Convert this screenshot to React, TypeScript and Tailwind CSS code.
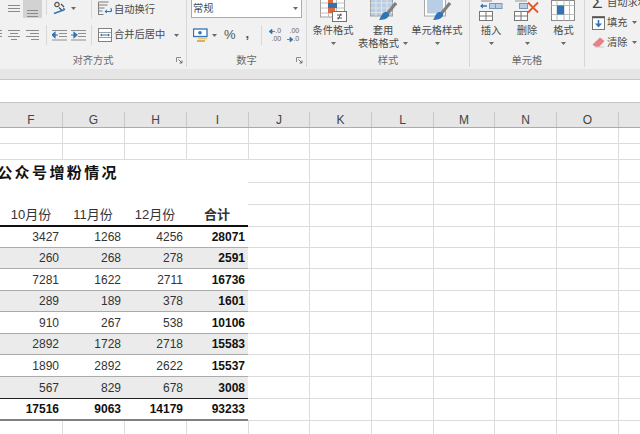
import React from "react";

const Caret = ({ className = "" }: { className?: string }) => (
  <svg width="5" height="3" viewBox="0 0 5 3" className={className}>
    <path d="M0 0h5L2.5 3z" fill="#6a6a6a" />
  </svg>
);

const Lines = ({ rows, w = 13, h = 12 }: { rows: [number, number, number][]; w?: number; h?: number }) => (
  <svg width={w} height={h} viewBox={`0 0 ${w} ${h}`} className="shrink-0">
    {rows.map(([x1, x2, y], i) => (
      <path key={i} d={`M${x1} ${y + 0.5}H${x2}`} stroke="#8a8a8a" strokeWidth="1" />
    ))}
  </svg>
);

const Orientation = () => (
  <svg width="15" height="15" viewBox="0 0 15 15" className="shrink-0">
    <circle cx="5" cy="3.5" r="2.2" fill="none" stroke="#555" strokeWidth="1.2" />
    <path d="M7 6.5l3 3M9 3l3 3" stroke="#555" strokeWidth="1.4" />
    <path d="M2 12.5L11.5 9" stroke="#2f75b5" strokeWidth="1.4" />
    <path d="M11 6.5l2.5 1.5-2 2.5z" fill="#2f75b5" />
  </svg>
);

const Indent = ({ flip = false }: { flip?: boolean }) => (
  <svg width="15" height="11" viewBox="0 0 15 11" className="shrink-0">
    <path d="M0 .5h15M7 3.5h8M7 6.5h8M0 10h15" stroke="#8f8f8f" strokeWidth="1" />
    {flip ? (
      <path d="M0 5h4M3 2.5L6 5 3 7.5z" stroke="#2f75b5" strokeWidth="1.2" fill="#2f75b5" />
    ) : (
      <path d="M6 5H2M3 2.5L0 5l3 2.5z" stroke="#2f75b5" strokeWidth="1.2" fill="#2f75b5" />
    )}
  </svg>
);

const Wrap = () => (
  <svg width="14" height="15" viewBox="0 0 14 15" className="shrink-0">
    <path d="M.5 1h10M.5 4h9M.5 7h6M.5 10h4M.5 13.5h5M.5 1v13" stroke="#7d7d7d" strokeWidth="1" fill="none" />
    <path d="M8 10.5h3.5a1.5 1.5 0 0 0 1-3" stroke="#2f75b5" strokeWidth="1.2" fill="none" />
    <path d="M6.5 10.5L9 8.5v4z" fill="#2f75b5" />
  </svg>
);

const Merge = () => (
  <svg width="14" height="14" viewBox="0 0 14 14" className="shrink-0">
    <rect x=".5" y=".5" width="13" height="13" fill="#fff" stroke="#808080" />
    <path d="M1 4.5h12M1 9.5h12" stroke="#a0a0a0" />
    <path d="M3 7h8" stroke="#2f75b5" />
    <path d="M2 7l2-1.5v3zM12 7l-2-1.5v3z" fill="#2f75b5" />
  </svg>
);

const Currency = () => (
  <svg width="15" height="15" viewBox="0 0 15 15" className="shrink-0">
    <rect x=".5" y="1" width="13.5" height="7.5" fill="#fff" stroke="#2f75b5" strokeWidth="1.3" />
    <circle cx="7" cy="4.7" r="1.8" fill="#2f75b5" />
    <rect x="5" y="9.5" width="9" height="1.8" fill="#e8c27a" />
    <rect x="4" y="12" width="8" height="2" fill="#e0b060" />
  </svg>
);

const Arrow = ({ right }: { right?: boolean }) => (
  <svg width="6" height="5" viewBox="0 0 6 5" className="shrink-0">
    {right ? <path d="M0 2.5h3M6 2.5L3 .2v4.6z" stroke="#2f75b5" fill="#2f75b5" strokeWidth=".8" /> : <path d="M6 2.5H3M0 2.5L3 .2v4.6z" stroke="#2f75b5" fill="#2f75b5" strokeWidth=".8" />}
  </svg>
);

const Decimal = ({ inc }: { inc?: boolean }) => (
  <div className="w-[14px] flex flex-col items-end text-[7px] leading-[8px] font-['Liberation_Sans',sans-serif] text-[#666666] shrink-0">
    {inc ? (
      <>
        <span>.00</span>
        <span className="flex items-center">
          <Arrow right />
          .0
        </span>
      </>
    ) : (
      <>
        <span className="flex items-center">
          <Arrow />
          .0
        </span>
        <span>.00</span>
      </>
    )}
  </div>
);

const Launcher = () => (
  <svg width="7" height="7" viewBox="0 0 7 7">
    <path d="M.5 5V.5H5" stroke="#8a8a8a" fill="none" />
    <path d="M2.5 2.5L6 6M6 3.5V6H3.5" stroke="#707070" fill="none" />
  </svg>
);

const CondIcon = () => (
  <svg width="27" height="22" viewBox="0 0 27 22">
    <rect x=".5" y="-2" width="24" height="19" fill="#fff" stroke="#a0a0a0" />
    <path d="M8.5 -2v19M16.5 -2v19M.5 3h24M.5 8h24M.5 13h24" stroke="#c0c0c0" />
    <rect x="8" y="-1" width="5" height="4" fill="#e2673b" />
    <rect x="8" y="3" width="9" height="5" fill="#2f75b5" />
    <rect x="8" y="8" width="7" height="5" fill="#e2673b" />
    <rect x="12.5" y="11.5" width="14" height="10" fill="#fff" stroke="#707070" />
    <path d="M17 15h5M17 18h5M21 13.5l-3 6" stroke="#444" strokeWidth=".9" fill="none" />
  </svg>
);

const Brush = () => (
  <>
    <path d="M26 3l-9 11" stroke="#7f7f7f" strokeWidth="3.2" />
    <path d="M15 12c3 0 5 2 4 4-2 3-6 4-10 4 2-2 2-7 6-8z" fill="#2f75b5" />
  </>
);

const TableStyleIcon = () => (
  <svg width="27" height="22" viewBox="0 0 27 22">
    <rect x=".5" y="-2" width="22" height="18" fill="#b9cde5" stroke="#a0a0a0" />
    <path d="M6 -2v18M11.5 -2v18M17 -2v18M.5 3h22M.5 8h22M.5 12.5h22" stroke="#e4e4e4" />
    <Brush />
  </svg>
);

const CellStyleIcon = () => (
  <svg width="27" height="22" viewBox="0 0 27 22">
    <rect x=".5" y="-2" width="21" height="18" fill="#fff" stroke="#a8a8a8" />
    <rect x="3" y="-2" width="16" height="15.5" fill="#b9cde5" />
    <Brush />
  </svg>
);

const Grid3 = () => (
  <>
    <rect x=".5" y="11.5" width="13" height="9" fill="#fff" stroke="#777" />
    <path d="M7 11.5v9M.5 16h13" stroke="#777" />
  </>
);

const InsertIcon = () => (
  <svg width="24" height="21" viewBox="0 0 24 21">
    <path d="M2 1h11" stroke="#888" />
    <rect x="10.5" y="3.5" width="6" height="5" fill="#b9cde5" stroke="#7d97b8" />
    <rect x="16.5" y="3.5" width="6.5" height="5" fill="#b9cde5" stroke="#7d97b8" />
    <path d="M3 6h5" stroke="#2f75b5" strokeWidth="1.5" />
    <path d="M1 6l3-2.5v5z" fill="#2f75b5" />
    <Grid3 />
  </svg>
);

const DeleteIcon = () => (
  <svg width="26" height="21" viewBox="0 0 26 21">
    <path d="M1 1h12" stroke="#999" />
    <rect x="5.5" y="3.5" width="8" height="5" fill="#b9cde5" stroke="#7d97b8" />
    <Grid3 />
    <path d="M14 2.5l10 10M24 2.5l-10 10" stroke="#e2572b" strokeWidth="1.8" />
  </svg>
);

const FormatIcon = () => (
  <svg width="25" height="22" viewBox="0 0 25 22">
    <rect x=".5" y=".5" width="23" height="20" fill="#fff" stroke="#8a8a8a" />
    <path d="M6 .5v20M13 .5v20M18.5 .5v20M.5 5.5h23M.5 14.5h23" stroke="#bdbdbd" />
    <rect x="6" y="5.5" width="7" height="9" fill="#2f75b5" />
  </svg>
);

const BigButton = ({
  widthClass,
  icon,
  line1,
  line2,
}: {
  widthClass: string;
  icon: React.ReactNode;
  line1: string;
  line2?: string;
}) => (
  <div className={`${widthClass} flex flex-col items-center`}>
    <div className="h-[23px] flex items-start justify-center">{icon}</div>
    <div className="h-[14px] leading-[15px] whitespace-nowrap">{line1}</div>
    <div className="h-[13px] leading-[13px] flex items-center gap-[4px] whitespace-nowrap">
      {line2 && <span>{line2}</span>}
      <Caret />
    </div>
  </div>
);

const GroupLabel = ({ text, launcher }: { text: string; launcher?: boolean }) => (
  <div className="h-[13px] grid grid-cols-[1fr_auto_1fr] items-center text-[#6a6a6a] leading-[13px]">
    <span />
    <span>{text}</span>
    <span className="justify-self-end pr-[3px] flex">{launcher && <Launcher />}</span>
  </div>
);

const VSep = ({ className }: { className: string }) => <div className={`w-px bg-[#d8d8d8] shrink-0 ${className}`} />;

const Ribbon = () => (
  <div className="h-[69px] bg-[#f1f1f1] flex text-[10.25px] text-[#4a4a4a] overflow-hidden">
    {/* alignment */}
    <div className="w-[187px] h-[67px] border-r border-[#d6d6d6] flex flex-col shrink-0">
      <div className="h-[54px] flex flex-col shrink-0">
        <div className="h-[18px] flex items-start">
          <div className="ml-[8px] mt-[5px]">
            <Lines w={12} h={7} rows={[[0, 12, 0], [0, 12, 3], [0, 12, 6]]} />
          </div>
          <div className="ml-[3px] w-[19px] h-[18px] bg-[#d2d2d2] flex justify-center items-start pt-[10px]">
            <Lines w={11} h={7} rows={[[0, 11, 0], [0, 11, 3], [0, 11, 6]]} />
          </div>
          <VSep className="ml-[4px] h-[15px]" />
          <div className="ml-[5px] mt-[1px]">
            <Orientation />
          </div>
          <Caret className="ml-[4px] mt-[7px]" />
          <VSep className="ml-[15px] h-[18px]" />
          <div className="ml-[6px] mt-[1px]">
            <Wrap />
          </div>
          <span className="ml-[2px] mt-[1px] leading-[18px] whitespace-nowrap">自动换行</span>
        </div>
        <div className="mt-[7px] h-[20px] flex items-center">
          <Lines w={2} h={10} rows={[[0, 2, 0], [0, 2, 3], [0, 2, 6]]} />
          <div className="ml-[6px]">
            <Lines w={12} h={10} rows={[[0, 12, 0], [2, 10, 3], [0, 12, 6], [3, 9, 9]]} />
          </div>
          <div className="ml-[6px]">
            <Lines w={13} h={10} rows={[[0, 13, 0], [4, 13, 3], [0, 13, 6], [5, 13, 9]]} />
          </div>
          <VSep className="ml-[7px] h-[20px]" />
          <div className="ml-[5px]">
            <Indent />
          </div>
          <div className="ml-[4px]">
            <Indent flip />
          </div>
          <VSep className="ml-[5px] h-[20px]" />
          <div className="ml-[6px]">
            <Merge />
          </div>
          <span className="ml-[2px] whitespace-nowrap">合并后居中</span>
          <Caret className="ml-[9px]" />
        </div>
      </div>
      <GroupLabel text="对齐方式" launcher />
    </div>

    {/* number */}
    <div className="w-[120px] h-[67px] border-r border-[#d6d6d6] flex flex-col shrink-0">
      <div className="h-[54px] flex flex-col shrink-0">
        <div className="ml-[4px] w-[111px] h-[18px] bg-white border border-t-0 border-[#ababab] flex items-center justify-between pl-[1px] pr-[3px]">
          <span className="leading-[16px]">常规</span>
          <Caret />
        </div>
        <div className="mt-[9px] h-[16px] flex items-center">
          <div className="ml-[6px]">
            <Currency />
          </div>
          <Caret className="ml-[4px]" />
          <span className="ml-[7px] text-[13px] leading-[16px] font-['Liberation_Sans',sans-serif] text-[#555555]">%</span>
          <span className="ml-[10px] text-[13px] leading-[16px] font-bold font-['Liberation_Sans',sans-serif] text-[#555555] -mt-[2px]">,</span>
          <VSep className="ml-[12px] h-[20px]" />
          <div className="ml-[5px]">
            <Decimal />
          </div>
          <div className="ml-[4px]">
            <Decimal inc />
          </div>
        </div>
      </div>
      <GroupLabel text="数字" launcher />
    </div>

    {/* styles */}
    <div className="w-[163px] h-[67px] border-r border-[#d6d6d6] flex flex-col shrink-0">
      <div className="h-[54px] flex shrink-0">
        <BigButton widthClass="w-[52px]" icon={<CondIcon />} line1="条件格式" />
        <BigButton widthClass="w-[48px]" icon={<TableStyleIcon />} line1="套用" line2="表格格式" />
        <BigButton widthClass="w-[60px]" icon={<CellStyleIcon />} line1="单元格样式" />
      </div>
      <GroupLabel text="样式" />
    </div>

    {/* cells */}
    <div className="w-[115px] h-[67px] border-r border-[#d6d6d6] flex flex-col shrink-0">
      <div className="h-[54px] flex pl-[3px] shrink-0">
        <BigButton widthClass="w-[36px]" icon={<InsertIcon />} line1="插入" />
        <BigButton widthClass="w-[36px]" icon={<DeleteIcon />} line1="删除" />
        <BigButton widthClass="w-[37px]" icon={<FormatIcon />} line1="格式" />
      </div>
      <GroupLabel text="单元格" />
    </div>

    {/* editing */}
    <div className="flex-1 min-w-0 flex flex-col pl-[7px] overflow-hidden">
      <div className="h-[15px] -mt-[5px] flex items-center whitespace-nowrap">
        <span className="w-[15px] shrink-0 text-[17px] leading-[15px] font-['Liberation_Sans',sans-serif] text-[#444444]">Σ</span>
        <span>自动求和</span>
      </div>
      <div className="mt-[3px] h-[19px] flex items-center">
        <svg width="13" height="14" viewBox="0 0 13 14" className="shrink-0">
          <rect x=".5" y=".5" width="12" height="13" fill="#fff" stroke="#777" />
          <path d="M.5 1.5h12" stroke="#555" strokeWidth="1.5" />
          <path d="M6.5 4v5" stroke="#2f75b5" strokeWidth="1.6" />
          <path d="M3 7.5h7L6.5 11.5z" fill="#2f75b5" />
        </svg>
        <span className="ml-[2px] whitespace-nowrap">填充</span>
        <Caret className="ml-[4px]" />
      </div>
      <div className="mt-[1px] h-[19px] flex items-center">
        <svg width="13" height="11" viewBox="0 0 13 11" className="shrink-0">
          <path d="M8 .5l4.5 3.5L7 10H3.5L.5 7.5z" fill="#e8808a" />
          <path d="M3 10h9" stroke="#c8c8c8" />
        </svg>
        <span className="ml-[2px] whitespace-nowrap">清除</span>
        <Caret className="ml-[4px]" />
      </div>
    </div>
  </div>
);

const cols = ["F", "G", "H", "I", "J", "K", "L", "M", "N", "O"];
const gridCols = "grid-cols-[62px_62px_62px_62px_61px_62px_62px_61px_62px_62px_22px]";

const ColumnHeader = () => (
  <div className={`h-[26px] bg-[#e6e6e6] border-t border-[#c6c6c6] border-b border-b-[#ababab] grid ${gridCols}`}>
    {[...cols, ""].map((c, i) => (
      <div key={i} className="flex items-end">
        {i > 0 && <span className="w-px h-[15px] bg-[#c8c8c8]" />}
        <span className="flex-1 text-center text-[12px] leading-[13px] text-[#444444]">{c}</span>
      </div>
    ))}
  </div>
);

const data: (number | string)[][] = [
  [3427, 1268, 4256, 28071],
  [260, 268, 278, 2591],
  [7281, 1622, 2711, 16736],
  [289, 189, 378, 1601],
  [910, 267, 538, 10106],
  [2892, 1728, 2718, 15583],
  [1890, 2892, 2622, 15537],
  [567, 829, 678, 3008],
  [17516, 9063, 14179, 93233],
];

const Blank = ({ line = true }: { line?: boolean }) => (
  <div className={`border-b border-[#dcdcdc] ${line ? "border-l" : ""}`} />
);

/* columns J to the right edge; J only has its left line outside the table */
const BlankRight = ({ edge = false }: { edge?: boolean }) => (
  <>
    <Blank line={edge} />
    <Blank />
    <Blank />
    <Blank />
    <Blank />
    <Blank />
    <Blank />
  </>
);

const OpenRow = () => (
  <>
    <Blank line={false} />
    <Blank />
    <Blank />
    <Blank />
    <BlankRight edge />
  </>
);

const Sheet = () => (
  <div
    className={`grid ${gridCols} grid-rows-[16px_16px_23px_22px_22px_21px_21px_22px_21px_22px_21px_22px_22px_22px_22px] text-[12px] text-[#333333] h-[306px] overflow-hidden`}
  >
    <OpenRow />
    <OpenRow />

    <div className="col-span-4 row-span-2 flex justify-end pr-[129px] pt-[3px] whitespace-nowrap text-[15px] font-bold tracking-[2.4px] leading-[20px] text-[#111111] bg-white">
      公众号增粉情况
    </div>
    <BlankRight />
    <BlankRight />

    {["10月份", "11月份", "12月份"].map((h) => (
      <div key={h} className="border-b-2 border-[#111111] flex items-center justify-center text-[13px]">
        {h}
      </div>
    ))}
    <div className="border-b-2 border-[#111111] flex items-center justify-center text-[13px] font-semibold">合计</div>
    <BlankRight />

    {data.map((row, i) => {
      const total = i === 8;
      const gray = !total && i % 2 === 1;
      const line = total
        ? "border-b-2 border-[#808080]"
        : i === 7
          ? "border-b border-[#222222]"
          : "border-b border-[#ababab]";
      return (
        <React.Fragment key={i}>
          {row.map((v, j) => (
            <div
              key={j}
              className={`${line} ${gray ? "bg-[#ebebeb]" : "bg-white"} ${j === 3 || total ? "font-bold text-[#111111]" : ""} flex items-center justify-end pr-[3px]`}
            >
              {v}
            </div>
          ))}
          <BlankRight />
        </React.Fragment>
      );
    })}

    <OpenRow />
  </div>
);

export default function App() {
  return (
    <div className="w-[640px] h-[434px] overflow-hidden bg-white font-['Liberation_Sans','Noto_Sans_CJK_SC',sans-serif]">
      <Ribbon />
      <div className="h-[11px] bg-[#e6e6e6] border-b border-[#c8c8c8]" />
      <div className="h-[22px] bg-white" />
      <ColumnHeader />
      <Sheet />
    </div>
  );
}
